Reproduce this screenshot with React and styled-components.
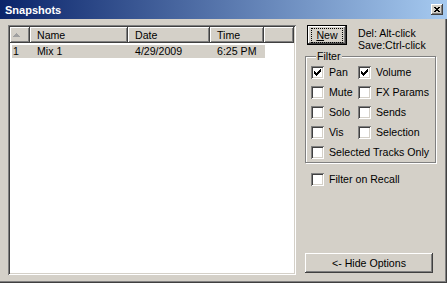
import React from "react";
import styled, { createGlobalStyle } from "styled-components";

const GlobalStyle = createGlobalStyle`
  html, body {
    margin: 0;
    padding: 0;
    background: #d4d0c8;
  }
  body {
    font-family: "Liberation Sans", Arial, sans-serif;
    font-size: 10.6px;
    color: #000;
  }
`;

const raised = `
  box-shadow: inset -1px -1px #404040, inset 1px 1px #ffffff,
    inset -2px -2px #808080, inset 2px 2px #d4d0c8;
`;

const sunken = `
  box-shadow: inset 1px 1px #808080, inset -1px -1px #ffffff,
    inset 2px 2px #404040, inset -2px -2px #d4d0c8;
`;

const Window = styled.div`
  width: 447px;
  height: 283px;
  box-sizing: border-box;
  background: #d4d0c8;
  display: flex;
  flex-direction: column;
  overflow: hidden;
  box-shadow: inset -1px -1px #404040, inset -2px -2px #808080;
`;

const TitleBar = styled.div`
  height: 19px;
  flex: none;
  display: flex;
  align-items: center;
  justify-content: space-between;
  padding: 0 4px 0 5px;
  background: linear-gradient(to right, #0a246a, #a6caf0);
  color: #fff;
  font-weight: bold;
  font-size: 11px;
`;

const CloseButton = styled.div`
  width: 12px;
  height: 11px;
  background: #d4d0c8;
  display: flex;
  align-items: center;
  justify-content: center;
  ${raised}
`;

const Body = styled.div`
  flex: 1;
  display: flex;
  gap: 9px;
  padding: 6px 0 0 8px;
`;

const List = styled.div`
  width: 288px;
  height: 250px;
  box-sizing: border-box;
  padding: 2px;
  background: #fff;
  ${sunken}
`;

const HeaderRow = styled.div`
  display: flex;
  height: 16px;
`;

const HeaderCell = styled.div`
  box-sizing: border-box;
  width: ${(p) => (p.$w ? `${p.$w}px` : "auto")};
  flex: ${(p) => (p.$w ? "none" : "1")};
  padding-left: ${(p) => (p.$pad !== undefined ? p.$pad : 7)}px;
  line-height: 16px;
  background: #d4d0c8;
  display: flex;
  align-items: center;
  ${raised}
`;

const ItemRow = styled.div`
  display: flex;
  width: 253px;
  height: 13px;
  margin: 2px 0 0 2px;
  background: #d4d0c8;
  line-height: 13px;
`;

const ItemCell = styled.div`
  box-sizing: border-box;
  width: ${(p) => p.$w}px;
  padding-left: ${(p) => p.$pad}px;
  white-space: nowrap;
`;

const Panel = styled.div`
  width: 131px;
  height: 250px;
  display: flex;
  flex-direction: column;
`;

const TopRow = styled.div`
  display: flex;
  align-items: flex-start;
  gap: 11px;
  padding-left: 2px;
`;

const Button = styled.div`
  box-sizing: border-box;
  height: ${(p) => p.$h || 20}px;
  width: ${(p) => p.$w}px;
  display: flex;
  align-items: center;
  justify-content: center;
  background: #d4d0c8;
  ${(p) =>
    p.$default
      ? `border: 1px solid #000;
         box-shadow: inset -1px -1px #404040, inset 1px 1px #ffffff,
           inset -2px -2px #808080;`
      : raised}
`;

const FocusRing = styled.span`
  padding: 0 3px;
  line-height: 11px;
  outline: 1px dotted #000;
  outline-offset: 1px;
  u {
    text-decoration: underline;
  }
`;

const Hint = styled.div`
  line-height: 12px;
  padding-top: 2px;
  white-space: nowrap;
`;

const Group = styled.fieldset`
  margin: 0;
  padding: 0 0 0 5px;
  width: 131px;
  box-sizing: border-box;
  border: 1px solid #808080;
  box-shadow: inset 1px 1px #ffffff, 1px 1px #ffffff;
  display: grid;
  grid-template-columns: 47px 1fr;
  grid-auto-rows: 20px;
`;

const Legend = styled.legend`
  padding: 0 1px;
  margin-left: 5px;
  line-height: 11px;
  background: #d4d0c8;
`;

const CheckRow = styled.label`
  display: flex;
  align-items: center;
  gap: 5px;
  white-space: nowrap;
  grid-column: ${(p) => (p.$wide ? "1 / span 2" : "auto")};
`;

const Box = styled.span`
  width: 13px;
  height: 13px;
  flex: none;
  box-sizing: border-box;
  background: #fff;
  display: flex;
  align-items: center;
  justify-content: center;
  ${sunken}
`;

const Recall = styled.div`
  display: flex;
  height: 20px;
  margin-top: 6px;
  padding-left: 6px;
`;

const BottomButton = styled.div`
  margin-top: auto;
  margin-bottom: 2px;
`;

const checkPixels = [
  [6, 1],
  [5, 2],
  [0, 1, 4, 3],
  [0, 2, 3, 3],
  [0, 5],
  [1, 3],
  [2, 1],
];

const CheckMark = () => {
  let d = "";
  checkPixels.forEach((seg, y) => {
    for (let i = 0; i < seg.length; i += 2) {
      d += `M${seg[i]} ${y}h${seg[i + 1]}v1h-${seg[i + 1]}z`;
    }
  });
  return (
    <svg width="7" height="7" viewBox="0 0 7 7" shapeRendering="crispEdges">
      <path d={d} fill="#000" />
    </svg>
  );
};

const CloseGlyph = () => (
  <svg width="6" height="5" viewBox="0 0 6 5" shapeRendering="crispEdges">
    <path
      d="M0 0h2v1h-2zM4 0h2v1h-2zM1 1h4v1h-4zM2 2h2v1h-2zM1 3h4v1h-4zM0 4h2v1h-2zM4 4h2v1h-2z"
      fill="#000"
    />
  </svg>
);

const SortArrow = () => (
  <svg width="7" height="4" viewBox="0 0 7 4" shapeRendering="crispEdges">
    <path d="M3 0h1v1h1v1h1v1h1v1h-7v-1h1v-1h1v-1h1z" fill="#a0a0a0" />
  </svg>
);

const Check = ({ label, checked, wide }) => (
  <CheckRow $wide={wide}>
    <Box>{checked && <CheckMark />}</Box>
    {label}
  </CheckRow>
);

const filters = [
  { label: "Pan", checked: true },
  { label: "Volume", checked: true },
  { label: "Mute" },
  { label: "FX Params" },
  { label: "Solo" },
  { label: "Sends" },
  { label: "Vis" },
  { label: "Selection" },
];

const snapshots = [{ id: 1, name: "Mix 1", date: "4/29/2009", time: "6:25 PM" }];

export default function App() {
  return (
    <>
      <GlobalStyle />
      <Window>
        <TitleBar>
          <span>Snapshots</span>
          <CloseButton>
            <CloseGlyph />
          </CloseButton>
        </TitleBar>
        <Body>
          <List>
            <HeaderRow>
              <HeaderCell $w={20} $pad={3}>
                <SortArrow />
              </HeaderCell>
              <HeaderCell $w={98}>Name</HeaderCell>
              <HeaderCell $w={82}>Date</HeaderCell>
              <HeaderCell $w={54}>Time</HeaderCell>
              <HeaderCell />
            </HeaderRow>
            {snapshots.map((s) => (
              <ItemRow key={s.id}>
                <ItemCell $w={18} $pad={1}>
                  {s.id}
                </ItemCell>
                <ItemCell $w={98} $pad={7}>
                  {s.name}
                </ItemCell>
                <ItemCell $w={82} $pad={7}>
                  {s.date}
                </ItemCell>
                <ItemCell $w={55} $pad={7}>
                  {s.time}
                </ItemCell>
              </ItemRow>
            ))}
          </List>
          <Panel>
            <TopRow>
              <Button $w={40} $default>
                <FocusRing>
                  <u>N</u>ew
                </FocusRing>
              </Button>
              <Hint>
                Del: Alt-click
                <br />
                Save:Ctrl-click
              </Hint>
            </TopRow>
            <Group>
              <Legend>Filter</Legend>
              {filters.map((f) => (
                <Check key={f.label} label={f.label} checked={f.checked} />
              ))}
              <Check label="Selected Tracks Only" wide />
            </Group>
            <Recall>
              <Check label="Filter on Recall" />
            </Recall>
            <BottomButton>
              <Button $w={128}>&lt;- Hide Options</Button>
            </BottomButton>
          </Panel>
        </Body>
      </Window>
    </>
  );
}
